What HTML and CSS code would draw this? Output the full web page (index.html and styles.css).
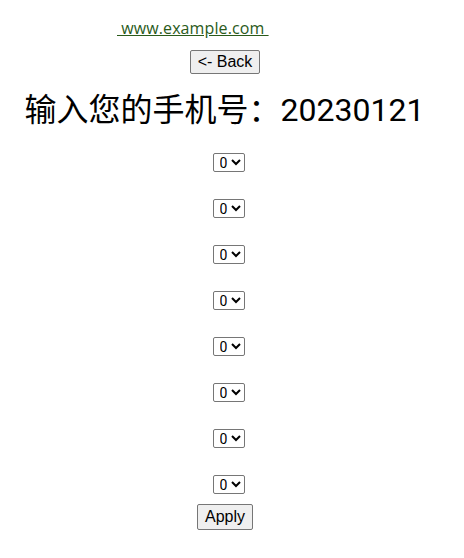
FILE: index.html
```html
<!DOCTYPE html>
<html lang="zh">
<head>
<meta charset="utf-8">
<title>Phone</title>
<link rel="stylesheet" href="styles.css">
</head>
<body>
<div class="page">
  <div class="linkrow"><a class="site" href="#">&nbsp;www.example.com&nbsp;</a></div>
  <button class="btn back" type="button">&lt;- Back</button>
  <h1 class="title">输入您的手机号：20230121</h1>
  <form class="digits">
    <select class="digit"><option>0</option><option>1</option><option>2</option><option>3</option><option>4</option><option>5</option><option>6</option><option>7</option><option>8</option><option>9</option></select>
    <select class="digit"><option>0</option><option>1</option><option>2</option><option>3</option><option>4</option><option>5</option><option>6</option><option>7</option><option>8</option><option>9</option></select>
    <select class="digit"><option>0</option><option>1</option><option>2</option><option>3</option><option>4</option><option>5</option><option>6</option><option>7</option><option>8</option><option>9</option></select>
    <select class="digit"><option>0</option><option>1</option><option>2</option><option>3</option><option>4</option><option>5</option><option>6</option><option>7</option><option>8</option><option>9</option></select>
    <select class="digit"><option>0</option><option>1</option><option>2</option><option>3</option><option>4</option><option>5</option><option>6</option><option>7</option><option>8</option><option>9</option></select>
    <select class="digit"><option>0</option><option>1</option><option>2</option><option>3</option><option>4</option><option>5</option><option>6</option><option>7</option><option>8</option><option>9</option></select>
    <select class="digit"><option>0</option><option>1</option><option>2</option><option>3</option><option>4</option><option>5</option><option>6</option><option>7</option><option>8</option><option>9</option></select>
    <select class="digit"><option>0</option><option>1</option><option>2</option><option>3</option><option>4</option><option>5</option><option>6</option><option>7</option><option>8</option><option>9</option></select>
  </form>
  <button class="btn apply" type="button">Apply</button>
</div>
</body>
</html>
```
FILE: styles.css
```css
html, body {
  margin: 0;
  padding: 0;
  background: #ffffff;
}
body {
  font-family: "Liberation Sans", Arial, sans-serif;
  color: #000;
}
.page {
  width: 457px;
  display: flex;
  flex-direction: column;
  align-items: center;
}
.linkrow {
  align-self: flex-start;
  padding-left: 117px;
  padding-top: 19px;
  height: 18px;
  line-height: 18px;
  font-size: 16px;
}
.site {
  color: #2a5a1a;
  text-decoration: underline;
  font-family: "Open Sans", "Liberation Sans", sans-serif;
  font-size: 16px;
  letter-spacing: 0.1px;
}
.btn {
  font-family: "Liberation Sans", Arial, sans-serif;
  font-size: 16px;
  color: #000;
  background: #efefef;
  border: 1px solid #767676;
  border-radius: 2px;
  padding: 1px 6px;
  margin-left: -7px;
}
.back {
  margin-top: 13px;
  width: 70px;
  height: 24px;
}
.title {
  margin: 16px 0 0 -8px;
  font-family: Roboto, "Noto Sans CJK SC", sans-serif;
  font-size: 32px;
  font-weight: 400;
  line-height: 40px;
  white-space: nowrap;
}
.digits {
  margin-top: 23px;
  display: flex;
  flex-direction: column;
  align-items: center;
  gap: 27px;
}
.digit {
  width: 32px;
  height: 19px;
  font-family: Roboto, "Liberation Sans", sans-serif;
  font-size: 14px;
  margin-left: 0;
  padding: 0 0 0 2px;
  border: 1px solid #767676;
  border-radius: 2px;
  background: #fff;
  color: #000;
}
.apply {
  margin-top: 10px;
  width: 56px;
  height: 26px;
}
```
